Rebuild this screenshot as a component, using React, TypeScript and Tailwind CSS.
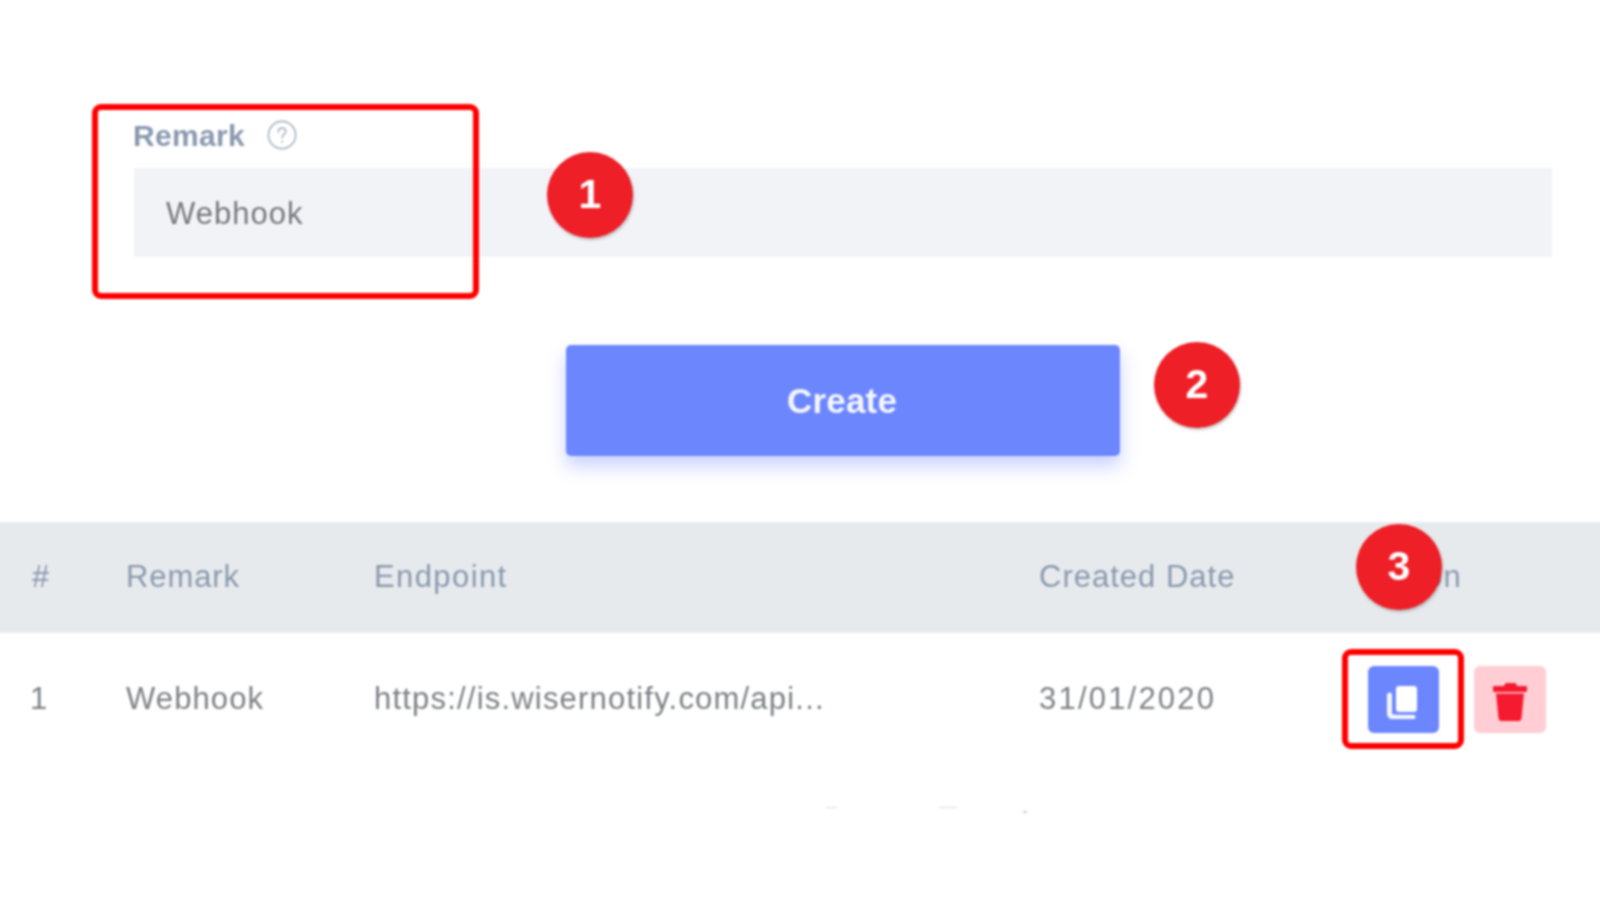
import React from 'react';

const font = "font-['Liberation_Sans',Arial,sans-serif]";

const Badge = ({ n, className }: { n: number; className: string }) => (
  <div
    className={`absolute flex h-[86px] w-[86px] items-center justify-center rounded-full bg-[#ee1f27] text-[41px] font-bold text-white shadow-[1px_2px_3px_rgba(0,0,0,0.22)] ${className}`}
  >
    {n}
  </div>
);

const HeaderCell = ({ children, className }: { children?: React.ReactNode; className: string }) => (
  <div className={`text-[31px] text-[#8a99ae] ${className}`}>{children}</div>
);

const RowCell = ({ children, className }: { children?: React.ReactNode; className: string }) => (
  <div className={`text-[31px] text-[#7d8185] ${className}`}>{children}</div>
);

export default function App() {
  return (
    <div className="h-[900px] w-[1600px] overflow-hidden bg-white">
      <div className={`relative h-[900px] w-[1600px] bg-white blur-[0.9px] ${font}`}>
        {/* form */}
        <div className="pl-[134px] pr-[48px] pt-[117px]">
          <div className="-ml-[1px] flex h-[36px] items-center gap-[22px]">
            <span className="text-[30px] font-bold tracking-[0.3px] text-[#8a99ae]">Remark</span>
            <svg width="30" height="30" viewBox="0 0 30 30" fill="none">
              <circle cx="15" cy="15" r="13.6" stroke="#a9b6c6" strokeWidth="1.7" />
              <path d="M11.4 11.800c0-2.200 1.600-3.600 3.700-3.600s3.600 1.300 3.600 3.200c0 2.900-3.600 3-3.600 6.200" stroke="#a9b6c6" strokeWidth="1.700" strokeLinecap="round" />
              <circle cx="15.100" cy="21.600" r="1.100" fill="#a9b6c6" />
            </svg>
          </div>
          <div className="mt-[15px] flex h-[89px] items-center bg-[#f2f3f7] pl-[32px] pt-[3px] text-[31px] tracking-[1px] text-[#75787c]">
            Webhook
          </div>
        </div>

        <div className="mt-[88px] flex pl-[566px]">
          <button className="h-[111px] w-[554px] rounded-[5px] bg-[#6c87fe] pt-[2px] pr-[2px] text-[35px] font-bold tracking-[0.2px] text-[#f4f6ff] shadow-[0_10px_18px_rgba(108,135,254,0.38)]">
            Create
          </button>
        </div>

        {/* table */}
        <div className="-mx-[6px] mt-[66px] flex h-[111px] items-center bg-[#e7eaed] pl-[6px]">
          <HeaderCell className="w-[126px] pl-[32px]">#</HeaderCell>
          <HeaderCell className="w-[248px] tracking-[0.9px]">Remark</HeaderCell>
          <HeaderCell className="w-[665px] tracking-[1.4px]">Endpoint</HeaderCell>
          <HeaderCell className="w-[329px] tracking-[1px]">Created Date</HeaderCell>
          <HeaderCell className="tracking-[1.300px]">Action</HeaderCell>
        </div>
        <div className="mt-[33px] flex h-[67px] items-center">
          <RowCell className="w-[126px] pl-[30px]">1</RowCell>
          <RowCell className="w-[248px] tracking-[1.100px]">Webhook</RowCell>
          <RowCell className="w-[665px] tracking-[1.2px]">https://is.wisernotify.com/api...</RowCell>
          <RowCell className="w-[329px] tracking-[2.2px]">31/01/2020</RowCell>
          <div className="flex gap-[35px]">
            <button className="flex h-[67px] w-[71px] items-center justify-center rounded-[6px] bg-[#6c87fe] pt-[6px] pr-[3px]">
              <svg width="30" height="33" viewBox="0 0 30 33" fill="none">
                <path d="M2.500 9v18.500a3.500 3.500 0 0 0 3.500 3.500h20" stroke="#f4f6ff" strokeWidth="5" strokeLinecap="round" />
                <rect x="6.500" y="-1" width="25" height="30" rx="4" fill="#6c87fe" opacity="0.55" />
                <rect x="9" y="0" width="21" height="26" rx="3" fill="#fff" />
              </svg>
            </button>
            <button className="flex h-[67px] w-[72px] items-center justify-center rounded-[6px] bg-[#ffcdd3] pt-[5px]">
              <svg width="34" height="38" viewBox="0 0 34 38" fill="#f61a30">
                <path d="M11 3.500Q11 0 14 0h7q3 0 3 3.500z" />
                <rect x="0" y="3" width="34" height="6" rx="1" />
                <path d="M3 10.500h28l-2.400 24a3.500 3.500 0 0 1-3.500 3.500H8.900a3.500 3.500 0 0 1-3.500-3.500z" />
              </svg>
            </button>
          </div>
        </div>

        {/* annotations on top of the page */}
        <div className="absolute left-[92px] top-[104px] h-[195px] w-[387px] rounded-[9px] border-[6px] border-[#ff0000]" />
        <div className="absolute left-[1342px] top-[649px] h-[100px] w-[122px] rounded-[9px] border-[6px] border-[#ff0000]" />
        <Badge n={1} className="left-[547px] top-[152px]" />
        <Badge n={2} className="left-[1154px] top-[342px]" />
        <Badge n={3} className="left-[1356px] top-[524px]" />

        {/* faint specks left in the source picture */}
        <div className="absolute left-[826px] top-[807px] h-[1px] w-[11px] bg-[#dddddd]" />
        <div className="absolute left-[939px] top-[807px] h-[1px] w-[18px] bg-[#dddddd]" />
        <div className="absolute left-[1023px] top-[811px] h-[2px] w-[4px] bg-[#d0d0d0]" />
      </div>
    </div>
  );
}
